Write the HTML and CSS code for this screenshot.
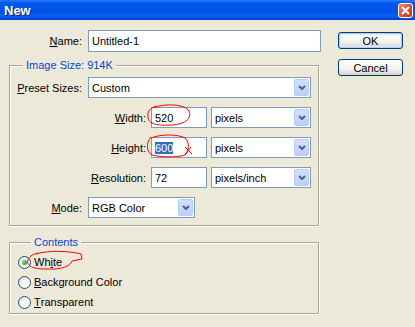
FILE: index.html
```html
<!DOCTYPE html>
<html lang="en">
<head>
    <meta charset="UTF-8">
    <title>New</title>
    <link rel="stylesheet" href="styles.css">
</head>
<body>
    <!-- Title Bar -->
    <div class="titlebar">
        <span class="title">New</span>
        <span class="close">
            <svg width="9" height="9" viewBox="0 0 9 9"><path d="M1 1 L8 8 M8 1 L1 8" stroke="#fff" stroke-width="2"></path></svg>
        </span>
    </div>

    <div class="dialog">
        <div class="main">
            <!-- Name -->
            <div class="name-row">
                <span class="lbl"><u>N</u>ame:</span>
                <div class="field name-field">Untitled-1</div>
            </div>

            <!-- Image Size -->
            <fieldset class="group size-group">
                <legend>Image Size: 914K</legend>
                <div class="row">
                    <span class="lbl"><u>P</u>reset Sizes:</span>
                    <div class="field combo preset">Custom<span class="arrow"><svg width="8" height="5" viewBox="0 0 8 5"><path d="M1 1 L4 4 L7 1" stroke="#4d6185" stroke-width="2" fill="none"></path></svg></span></div>
                </div>
                <div class="row">
                    <span class="lbl wide"><u>W</u>idth:</span>
                    <div class="field num">520</div>
                    <div class="field combo unit">pixels<span class="arrow"><svg width="8" height="5" viewBox="0 0 8 5"><path d="M1 1 L4 4 L7 1" stroke="#4d6185" stroke-width="2" fill="none"></path></svg></span></div>
                </div>
                <div class="row">
                    <span class="lbl wide"><u>H</u>eight:</span>
                    <div class="field num"><span class="sel">600</span></div>
                    <div class="field combo unit">pixels<span class="arrow"><svg width="8" height="5" viewBox="0 0 8 5"><path d="M1 1 L4 4 L7 1" stroke="#4d6185" stroke-width="2" fill="none"></path></svg></span></div>
                </div>
                <div class="row">
                    <span class="lbl wide"><u>R</u>esolution:</span>
                    <div class="field num">72</div>
                    <div class="field combo unit">pixels/inch<span class="arrow"><svg width="8" height="5" viewBox="0 0 8 5"><path d="M1 1 L4 4 L7 1" stroke="#4d6185" stroke-width="2" fill="none"></path></svg></span></div>
                </div>
                <div class="row">
                    <span class="lbl"><u>M</u>ode:</span>
                    <div class="field combo mode">RGB Color<span class="arrow"><svg width="8" height="5" viewBox="0 0 8 5"><path d="M1 1 L4 4 L7 1" stroke="#4d6185" stroke-width="2" fill="none"></path></svg></span></div>
                </div>
            </fieldset>

            <!-- Contents -->
            <fieldset class="group contents-group">
                <legend>Contents</legend>
                <div class="radio-row"><span class="radio checked"></span>Wh<u>i</u>te</div>
                <div class="radio-row"><span class="radio"></span><u>B</u>ackground Color</div>
                <div class="radio-row"><span class="radio"></span><u>T</u>ransparent</div>
            </fieldset>
        </div>

        <!-- Buttons -->
        <div class="side">
            <div class="btn default">OK</div>
            <div class="btn">Cancel</div>
        </div>
    </div>

    <!-- Red hand-drawn marks -->
    <svg class="marks" width="415" height="327" viewBox="0 0 415 327">
        <path d="M36 254 C48 250 70 251 81 254 L82 259 L72 261 C70 266 62 270 46 269 C33 269 26 266 28 260 C29 256 32 255 38 253"></path>
        <path d="M153 108 C165 103 185 104 189 111 C192 118 186 124 172 125 C158 126 148 124 148 117 C147 111 150 108 157 106"></path>
        <path d="M151 138 C160 134 178 134 185 138 C190 143 189 150 185 155 C175 158 160 157 152 155 C146 151 146 143 151 137"></path>
        <path d="M185 147 L192 154 M191 147 L185 155"></path>
    </svg>
</body>
</html>
```

FILE: styles.css
```css
/* General */
body {
    margin: 0;
    width: 415px;
    height: 327px;
    overflow: hidden;
    position: relative;
    background-color: #ece9d8;
    font-family: 'Liberation Sans', Arial, sans-serif;
    font-size: 11px;
    color: #000;
}

/* Title Bar */
.titlebar {
    height: 20px;
    display: flex;
    align-items: center;
    justify-content: space-between;
    padding: 0 2px 0 4px;
    background: linear-gradient(#2a7dfa 0, #0058ee 3px, #0054e6 12px, #0a5ff0 16px, #003fd0 20px);
}

.title {
    color: #fff;
    font-weight: bold;
    font-size: 13px;
    text-shadow: 1px 1px 0 #0a1a8a;
}

.close {
    width: 15px;
    height: 15px;
    box-sizing: border-box;
    border: 1px solid #fff;
    border-radius: 3px;
    background: linear-gradient(135deg, #f08a6a, #e0502f 50%, #c43514);
    display: flex;
    align-items: center;
    justify-content: center;
}

/* Layout */
.dialog {
    display: flex;
    padding-left: 9px;
}

.main {
    width: 312px;
}

.side {
    margin: 12px 0 0 17px;
    display: flex;
    flex-direction: column;
    gap: 10px;
}

/* Rows */
.name-row {
    display: flex;
    align-items: center;
    height: 22px;
    margin-top: 10px;
}

.row {
    display: flex;
    align-items: center;
    height: 21px;
    margin-top: 9px;
}

.group .row:first-of-type {
    margin-top: 0;
}

.lbl {
    width: 72px;
    margin-right: 6px;
    text-align: right;
    flex-shrink: 0;
}

.name-row .lbl {
    width: 73px;
}

.lbl.wide {
    width: 136px;
    margin-right: 5px;
}

/* Fields */
.field {
    box-sizing: border-box;
    height: 21px;
    border: 1px solid #7f9db9;
    background-color: #fff;
    padding-left: 3px;
    display: flex;
    align-items: center;
}

.name-field {
    width: 233px;
    height: 22px;
}

.num {
    width: 56px;
}

.sel {
    background-color: #316ac5;
    color: #fff;
}

.combo .arrow {
    margin-left: auto;
    margin-right: 1px;
    width: 15px;
    height: 17px;
    box-sizing: border-box;
    border: 1px solid #b9cdf7;
    border-radius: 2px;
    background: linear-gradient(#d3e0fd, #bccffa);
    display: flex;
    align-items: center;
    justify-content: center;
}

.preset {
    width: 223px;
}

.unit {
    width: 100px;
    margin-left: 4px;
}

.mode {
    width: 107px;
}

/* Group Boxes */
.group {
    box-sizing: border-box;
    width: 310px;
    margin: 0;
    border: 1px solid #aca899;
    box-shadow: inset 1px 1px 0 #fff, 1px 1px 0 #fff;
}

.group legend {
    margin-left: 13px;
    padding: 0 3px;
    color: #0046d5;
}

.size-group {
    margin-top: 7px;
    padding: 6px 0 7px 0;
}

.contents-group {
    margin-top: 10px;
    padding: 4px 0 1px 8px;
}

/* Radios */
.radio-row {
    display: flex;
    align-items: center;
    height: 20px;
}

.radio {
    width: 13px;
    height: 13px;
    box-sizing: border-box;
    margin-right: 3px;
    border: 1px solid #1c5180;
    border-radius: 50%;
    background: radial-gradient(circle at 65% 65%, #fff 20%, #e2e0d4 90%);
    display: flex;
    align-items: center;
    justify-content: center;
}

.radio.checked::after {
    content: "";
    width: 5px;
    height: 5px;
    border-radius: 50%;
    background: radial-gradient(circle at 35% 35%, #7ce27c, #21a121 70%);
}

/* Buttons */
.btn {
    box-sizing: border-box;
    width: 65px;
    height: 17px;
    border: 1px solid #003c74;
    border-radius: 3px;
    background: linear-gradient(#fff, #f3f2ed 60%, #d6d0c5);
    display: flex;
    align-items: center;
    justify-content: center;
}

.btn.default {
    box-shadow: inset 0 0 0 1px #b6cdf5, inset 0 0 0 2px #dce7fb;
}

/* Annotation marks */
.marks {
    position: absolute;
    left: 0;
    top: 0;
    pointer-events: none;
}

.marks path {
    fill: none;
    stroke: #ff0000;
    stroke-width: 1;
}
```
